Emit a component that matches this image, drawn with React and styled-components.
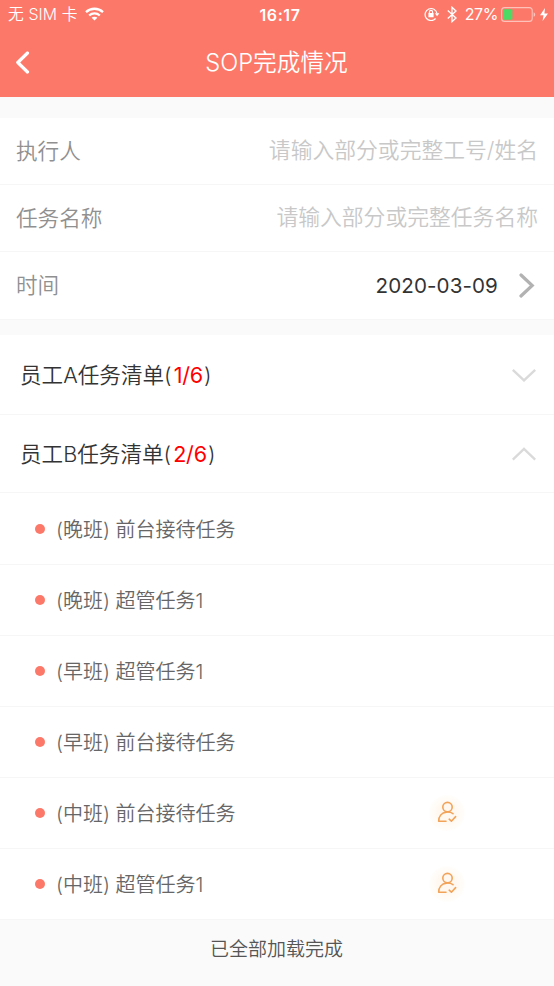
import { useState } from "react";
import styled, { createGlobalStyle } from "styled-components";

const GlobalStyle = createGlobalStyle`
  * {
    box-sizing: border-box;
  }
  body {
    margin: 0;
    background-color: #fafafa;
    font-family: Inter, "Noto Sans CJK SC", sans-serif;
    font-weight: 350;
  }
`

const Page = styled.div`
  width: 100%;
  min-height: 986px;
  overflow: hidden;
  background-color: #fafafa;
`

const Header = styled.header`
  height: 97px;
  background-color: #fc7969;
  color: white;
`

const StatusBar = styled.div`
  display: grid;
  grid-template-columns: 1fr auto 1fr;
  align-items: center;
  height: 28px;
  padding: 0 6px 0 8px;
  font-size: 15.5px;
  line-height: 28px;
`

const Carrier = styled.div`
  display: flex;
  align-items: center;
  gap: 7px;
  padding-top: 1px;
  font-size: 15.8px;
  letter-spacing: 0.1px;
  white-space: pre;

  svg {
    margin-bottom: 2px;
  }
`

const Clock = styled.div`
  padding-left: 4px;
  font-size: 16px;
  font-weight: 600;
  letter-spacing: 0.6px;
`

const StatusIcons = styled.div`
  display: flex;
  align-items: center;
  justify-content: flex-end;
  padding-bottom: 1px;
`

const Percent = styled.span`
  margin: 0 3px 0 8px;
  font-size: 16px;
  font-weight: 400;
  letter-spacing: -0.4px;
`

const NavBar = styled.div`
  display: grid;
  grid-template-columns: 40px 1fr 40px;
  align-items: center;
  height: 69px;
  padding-left: 15px;
  padding-right: 16px;
`

const BackButton = styled.button`
  display: flex;
  padding: 0;
  border: 0;
  background: none;
  cursor: pointer;
`

const Title = styled.h1`
  margin: 0;
  padding-top: 1px;
  font-size: 23.7px;
  font-weight: 350;
  line-height: 68px;
  text-align: center;
`

const Form = styled.section`
  margin-top: 21px;
  background-color: white;
`

const Field = styled.div`
  display: flex;
  align-items: center;
  justify-content: space-between;
  height: ${props=>props.$last?"68px":"67px"};
  padding: 0 16px;
  border-bottom: 1px solid #f6f6f6;
  font-size: 21.6px;
`

const Label = styled.span`
  padding-bottom: 4px;
  color: #909090;
`

const Placeholder = styled.span`
  padding-bottom: 5px;
  color: #c8c8c8;
  font-size: 21.8px;
`

const DateValue = styled.span`
  display: flex;
  align-items: center;
  gap: 21px;
  padding-right: 2px;
  color: #333;
  font-size: 20.6px;
  font-weight: 400;
  letter-spacing: 0.1px;
`

const Lists = styled.section`
  margin-top: 15px;
  background-color: white;
`

const ListHeader = styled.div`
  display: flex;
  align-items: center;
  justify-content: space-between;
  height: ${props=>props.$height}px;
  padding: 0 18px 0 20px;
  border-bottom: 1px solid #f6f6f6;
  color: #333;
  font-size: 21.6px;
  cursor: pointer;
`

const ListName = styled.span`
  padding-bottom: 3px;
`

const Count = styled.span`
  margin: 0 1px 0 2px;
  color: #ff0000;
  font-weight: 400;
  letter-spacing: -0.2px;
`

const TaskRow = styled.div`
  display: flex;
  align-items: center;
  height: 71px;
  padding-left: 35px;
  padding-right: 89px;
  border-bottom: 1px solid #f6f6f6;
  color: #666;
  font-size: 20px;

  &:first-child {
    height: 72px;
    padding-top: 1px;
  }
`

const Dot = styled.span`
  width: 10px;
  height: 10px;
  margin: 0 11px 1px 0;
  border-radius: 50%;
  background-color: #fc7969;
`

const TaskName = styled.span`
  flex: 1;
  padding-bottom: 2px;
  white-space: pre;
`

const Badge = styled.span`
  display: flex;
  align-items: center;
  justify-content: center;
  width: 36px;
  height: 36px;
  padding: 0 1px 2px 0;
  border-radius: 50%;
  background-image: radial-gradient(circle, #fff8f0 35%, #fffefc 70%);
`

const Footer = styled.footer`
  height: 66px;
  padding-top: 16px;
  padding-right: 1px;
  color: #555;
  font-size: 19px;
  line-height: 28px;
  text-align: center;
`

const WifiIcon = () => (
  <svg width="19" height="14" viewBox="0 0 19 14" fill="none" stroke="white" strokeWidth="2.3">
    <path d="M1 5.2C5.8 0.6 13.2 0.6 18 5.2" />
    <path d="M4.2 8.5C7.2 5.7 11.8 5.7 14.8 8.5" />
    <path d="M9.5 13.6L6.6 10.8C8.2 9.3 10.8 9.3 12.4 10.8Z" fill="white" stroke="none" />
  </svg>
)

const LockIcon = () => (
  <svg width="16" height="14" viewBox="0 0 16 14" fill="none" stroke="white">
    <path d="M11.6 11.5A6 6 0 1 1 13 6.5" strokeWidth="1.2" />
    <path d="M10.8 6.3H15.4L13.1 9.2Z" fill="white" stroke="none" />
    <rect x="4.4" y="6" width="5.2" height="4.2" rx="0.5" fill="white" stroke="none" />
    <path d="M5.4 6.2V5A1.6 1.6 0 0 1 8.6 5V6.2" strokeWidth="1.1" />
  </svg>
)

const BluetoothIcon = () => (
  <svg width="10" height="17" viewBox="0 0 10 17" fill="none" stroke="white" strokeWidth="1.3" style={{ marginLeft: 7 }}>
    <path d="M0.8 4.5L9 12L5 15.7V1.2L9 4.9L0.8 12.4" />
  </svg>
)

const BatteryIcon = () => (
  <svg width="35" height="15" viewBox="0 0 35 15">
    <rect x="0.6" y="0.6" width="30.6" height="13.8" rx="3" fill="none" stroke="white" strokeOpacity="0.55" strokeWidth="1.1" />
    <rect x="2.2" y="2.2" width="9.2" height="10.6" rx="1" fill="#4cd964" />
    <path d="M32.6 5.2C34.7 6 34.7 9 32.6 9.8Z" fill="white" fillOpacity="0.55" />
  </svg>
)

const BoltIcon = () => (
  <svg width="8" height="13" viewBox="0 0 8 13" fill="white" style={{ marginLeft: 4 }}>
    <path d="M5 0L0 7.3H3.5L2.6 13L8 5.4H4.4Z" />
  </svg>
)

const BackIcon = () => (
  <svg width="15" height="23" viewBox="0 0 15 23" fill="none" stroke="white" strokeWidth="3.2" strokeLinecap="round" strokeLinejoin="round">
    <path d="M12.5 2L2.8 11.5L12.5 21" />
  </svg>
)

const ForwardIcon = () => (
  <svg width="17" height="25" viewBox="0 0 17 25" fill="none" stroke="#b2b2b2" strokeWidth="3.2" strokeLinecap="round">
    <path d="M2 2L13.2 12.5L2 23" />
  </svg>
)

const Chevron = ({ open }) => (
  <svg width="24" height="14" viewBox="0 0 24 14" fill="none" stroke="#dadada" strokeWidth="2.4">
    <path d={open?"M0.8 12.6L12 2L23.2 12.6":"M0.8 1.8L12 12.4L23.2 1.8"} />
  </svg>
)

const UserCheckIcon = () => (
  <svg width="20" height="22" viewBox="0 0 20 22" fill="none" stroke="#f2a35a" strokeWidth="1.6" strokeLinecap="round" strokeLinejoin="round">
    <circle cx="10.5" cy="6.1" r="4.7" />
    <path d="M9 20.2H1.7C1.7 15.2 4.7 11.6 9.4 11.1C11.9 10.9 14.2 11.3 16 12.7" />
    <path d="M12.2 18.2L14.4 20.2L18.6 15.6" />
  </svg>
)

const taskLists = [
  { name: "员工A任务清单", count: "1/6", height: 80, tasks: [] },
  {
    name: "员工B任务清单",
    count: "2/6",
    height: 78,
    tasks: [
      { text: "(晚班) 前台接待任务" },
      { text: "(晚班) 超管任务1" },
      { text: "(早班) 超管任务1" },
      { text: "(早班) 前台接待任务" },
      { text: "(中班) 前台接待任务", checked: true },
      { text: "(中班) 超管任务1", checked: true },
    ],
  },
]

const App = () => {
  const [opened, setOpened] = useState(1);

  const toggle = (idx) => setOpened(pre=>pre===idx?null:idx)

  return (
    <Page>
      <GlobalStyle />
      <Header>
        <StatusBar>
          <Carrier>无 SIM 卡<WifiIcon /></Carrier>
          <Clock>16:17</Clock>
          <StatusIcons>
            <LockIcon />
            <BluetoothIcon />
            <Percent>27%</Percent>
            <BatteryIcon />
            <BoltIcon />
          </StatusIcons>
        </StatusBar>
        <NavBar>
          <BackButton><BackIcon /></BackButton>
          <Title>SOP完成情况</Title>
        </NavBar>
      </Header>
      <Form>
        <Field>
          <Label>执行人</Label>
          <Placeholder>请输入部分或完整工号/姓名</Placeholder>
        </Field>
        <Field>
          <Label>任务名称</Label>
          <Placeholder>请输入部分或完整任务名称</Placeholder>
        </Field>
        <Field $last>
          <Label>时间</Label>
          <DateValue>2020-03-09<ForwardIcon /></DateValue>
        </Field>
      </Form>
      <Lists>
        {taskLists.map((list, idx) =>
          <div key={idx}>
            <ListHeader $height={list.height} onClick={() => toggle(idx)}>
              <ListName>{list.name}(<Count>{list.count}</Count>)</ListName>
              <Chevron open={opened===idx} />
            </ListHeader>
            {opened===idx?
              <div>
                {list.tasks.map((task, i) =>
                  <TaskRow key={i}>
                    <Dot />
                    <TaskName>{task.text}</TaskName>
                    {task.checked?<Badge><UserCheckIcon /></Badge>:null}
                  </TaskRow>
                )}
              </div>
              :null}
          </div>
        )}
      </Lists>
      <Footer>已全部加载完成</Footer>
    </Page>
  );
}

export default App;
